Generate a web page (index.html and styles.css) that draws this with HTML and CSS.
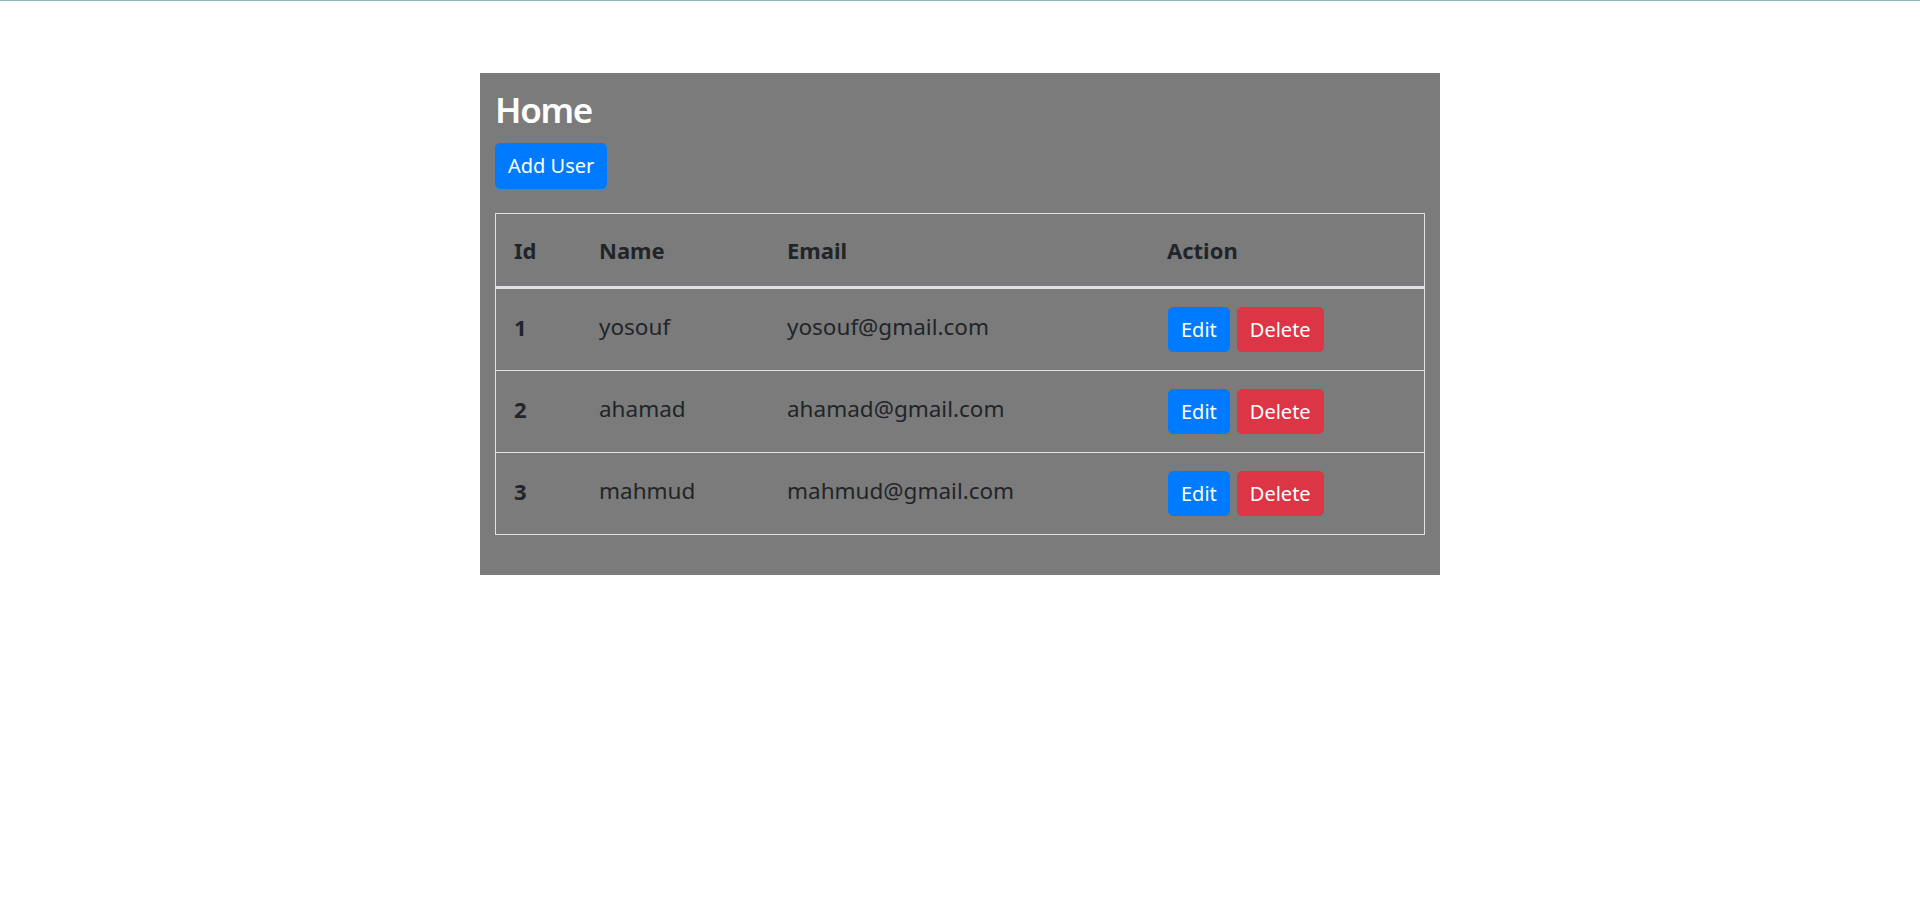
FILE: index.html
```html
<!DOCTYPE html>
<html lang="en">
<head>
<meta charset="utf-8">
<title>Home</title>
<link rel="stylesheet" href="styles.css">
</head>
<body>
<main class="panel">
  <h2 class="title">Home</h2>
  <a class="btn btn-primary btn-add" href="#">Add User</a>
  <table class="users">
    <colgroup>
      <col class="c-id"><col class="c-name"><col class="c-email"><col class="c-action">
    </colgroup>
    <thead>
      <tr><th>Id</th><th>Name</th><th>Email</th><th>Action</th></tr>
    </thead>
    <tbody>
      <tr>
        <th class="rowhead">1</th><td>yosouf</td><td>yosouf@gmail.com</td>
        <td class="action-cell"><div class="actions"><a class="btn btn-primary" href="#">Edit</a><button class="btn btn-danger" type="button">Delete</button></div></td>
      </tr>
      <tr>
        <th class="rowhead">2</th><td>ahamad</td><td>ahamad@gmail.com</td>
        <td class="action-cell"><div class="actions"><a class="btn btn-primary" href="#">Edit</a><button class="btn btn-danger" type="button">Delete</button></div></td>
      </tr>
      <tr>
        <th class="rowhead">3</th><td>mahmud</td><td>mahmud@gmail.com</td>
        <td class="action-cell"><div class="actions"><a class="btn btn-primary" href="#">Edit</a><button class="btn btn-danger" type="button">Delete</button></div></td>
      </tr>
    </tbody>
  </table>
</main>
</body>
</html>
```

FILE: styles.css
```css
html, body {
  background: #ffffff;
}
body {
  margin: 0;
  border-top: 1px solid #8fb9b9;
  font-family: "Noto Sans", "Open Sans", sans-serif;
  color: #212529;
}
.panel {
  box-sizing: border-box;
  width: 960px;
  margin: 72px auto 0;
  padding: 13px 15px 40px;
  background: #7b7b7b;
}
.title {
  margin: 0 0 9px;
  font-weight: 600;
  font-size: 35px;
  line-height: 48px;
  letter-spacing: -1.3px;
  color: #ffffff;
}
.btn {
  display: inline-block;
  box-sizing: border-box;
  height: 45px;
  padding: 0 12px;
  border: 1px solid transparent;
  border-radius: 5px;
  font-family: "Noto Sans", "Open Sans", sans-serif;
  font-size: 20px;
  line-height: 43px;
  color: #ffffff;
  text-decoration: none;
  cursor: pointer;
}
.btn-add {
  height: 46px;
  line-height: 44px;
}
.btn-primary {
  background: #007bff;
  border-color: #007bff;
}
.btn-danger {
  background: #dc3545;
  border-color: #dc3545;
}
.users {
  width: 930px;
  margin-top: 24px;
  table-layout: fixed;
  border-collapse: separate;
  border-spacing: 0;
  border: 1px solid #dee2e6;
  color: #212529;
}
.c-id { width: 85px; }
.c-name { width: 188px; }
.c-email { width: 380px; }
.c-action { width: 275px; }
.users thead th {
  padding: 21px 18px 21px;
  text-align: left;
  vertical-align: bottom;
  font-size: 22px;
  font-weight: 700;
  line-height: 30px;
  border-bottom: 3px solid #dee2e6;
}
.users tbody td,
.users tbody th {
  padding: 15px 18px 21px;
  text-align: left;
  vertical-align: middle;
  font-size: 22.5px;
  line-height: 30px;
  font-weight: 400;
  border-bottom: 1px solid #dee2e6;
}
.users tbody .action-cell {
  padding: 18px 18px;
}
.users tbody .rowhead {
  font-weight: 700;
  font-size: 22px;
}
.users tbody tr:last-child td,
.users tbody tr:last-child th {
  border-bottom: 0;
}
.actions {
  display: flex;
  gap: 7px;
  padding-left: 1px;
}
```
